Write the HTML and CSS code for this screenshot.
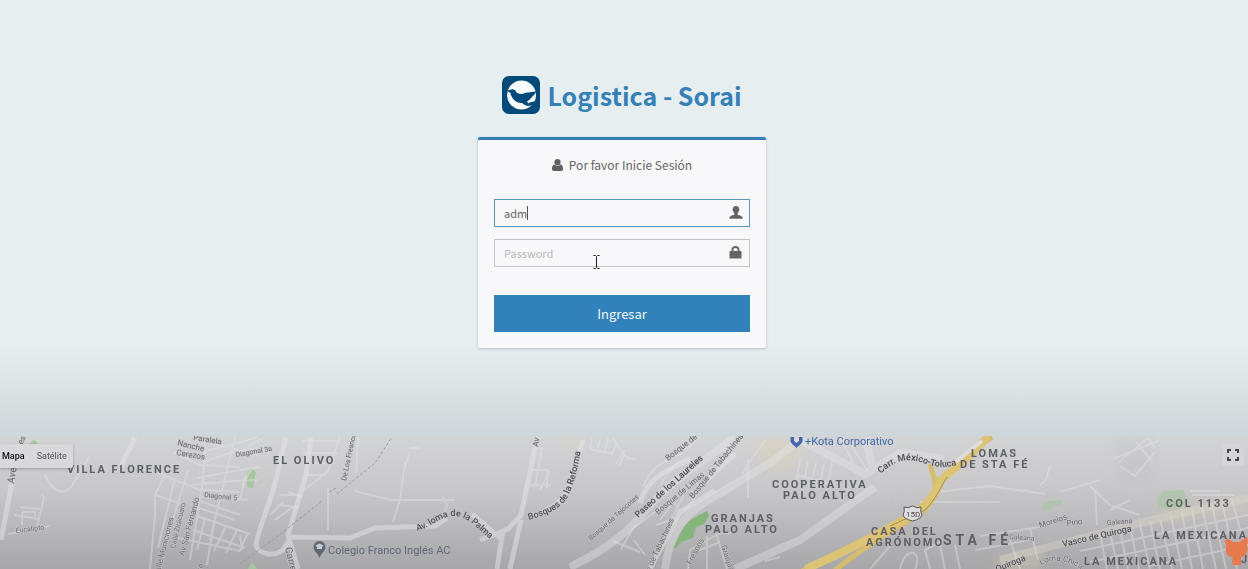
FILE: index.html
```html
<!DOCTYPE html>
<html lang="es">
<head>
<meta charset="utf-8">
<title>Logistica - Sorai</title>
<meta name="viewport" content="width=device-width, initial-scale=1">
<link rel="stylesheet" href="styles.css">
</head>
<body class="page">
<main class="login">
  <div class="login-box">
    <h1 class="brand">
      <svg class="brand-logo" viewBox="0 0 38 38" aria-hidden="true">
        <rect width="38" height="38" rx="7" fill="#034a7c"/>
        <circle cx="19.500" cy="19" r="14.500" fill="#fafcfe"/>
        <path d="M4.500 14.500 L8 14 C10.500 12.500 13.500 13.500 14.500 16.500 C18 18.500 20 18 23 17 C26 16.200 30 16 34.500 15.500 L32 19 L29.500 21.500 C28 23.500 26.500 24.500 25 25.500 L28 30 C25 30.500 22.500 29 20 27 C14 27.500 9 22 8.500 17Z" fill="#034a7c"/>
        <path d="M26 27 L33 25 L31.500 28.500 L28 30Z" fill="#034a7c"/>
      </svg>
      <span>Logistica - Sorai</span>
    </h1>
    <form class="card">
      <p class="card-title">
        <svg class="card-title-icon" viewBox="0 0 11 12" aria-hidden="true"><circle cx="5.500" cy="3.200" r="3.100"/><path d="M2.400 5.400 C4.200 7.300 6.800 7.300 8.600 5.400 C10.700 5.700 11 8 11 9.700 C11 11 10.300 12 9 12 H2 C.7 12 0 11 0 9.700 C0 8 .3 5.700 2.400 5.400Z"/></svg>
        <span>Por favor Inicie Sesión</span>
      </p>
      <div class="field">
        <input class="field-input field-input-active" type="text" aria-label="Usuario" value="adm">
        <span class="caret"></span>
        <svg class="field-icon" viewBox="0 0 14 13" aria-hidden="true"><path d="M7 0 C9.300 0 10.300 1.500 10.200 3.300 C10.600 3.500 10.400 5 9.800 5.200 C9.600 6.200 9.100 6.900 8.600 7.400 V8.400 C9.500 9.300 13 9.500 13.500 11.200 V12.700 H.5 V11.200 C1 9.500 4.500 9.300 5.400 8.400 V7.400 C4.900 6.900 4.400 6.200 4.200 5.200 C3.600 5 3.400 3.500 3.800 3.300 C3.700 1.500 4.700 0 7 0Z"/></svg>
      </div>
      <div class="field">
        <input class="field-input" type="password" aria-label="Password" placeholder="Password">
        <svg class="field-icon" viewBox="0 0 14 13" aria-hidden="true"><path fill-rule="evenodd" d="M2.500 5 V4 C2.500 1.500 4.200 0 6.500 0 S10.500 1.500 10.500 4 V5 H11.500 Q12.500 5 12.500 6 V12.600 H.5 V6 Q.5 5 1.500 5Z M4.400 5 H8.600 V4 C8.600 2.700 7.800 1.900 6.500 1.900 S4.400 2.700 4.400 4Z"/></svg>
        <svg class="pointer" viewBox="0 0 7 14" aria-hidden="true"><path d="M.5 .5 H2.500 L3.500 1.500 L4.500 .5 H6.500 M3.500 1.500 V12.500 M.5 13.500 H2.500 L3.500 12.500 L4.500 13.500 H6.500" fill="none" stroke="#222"/></svg>
      </div>
      <button class="submit" type="button">Ingresar</button>
    </form>
  </div>
</main>
<section class="map" aria-label="Mapa">
<svg class="map-canvas" viewBox="0 436 1248 133" preserveAspectRatio="xMidYMid slice">
  <defs>
    <path id="palma" d="M417 531 C432 527 439 517 452 516 C468 515 477 529 489 538 L500 546"/>
    <path id="reforma" d="M529 520 C551 513 563 508 569 494 C575 481 578 468 581 449 L584 430"/>
    <path id="toluca" d="M881 474 C898 456 914 459 926 464 Q940 469 957 465 L970 462"/>
    <path id="cinco" d="M1041 565 C1052 559 1063 559 1078 567 L1086 574"/>
    <filter id="haze" x="-20%" y="-40%" width="140%" height="180%"><feGaussianBlur stdDeviation="6"/></filter>
    <filter id="soft"><feGaussianBlur stdDeviation="0.6"/></filter>
  </defs>
  <g filter="url(#haze)">
    <path class="area-warm" d="M565 436 H580 V445 H565Z M755 440 L800 438 L802 458 L780 472 L758 460Z M1155 510 L1248 498 V510 L1160 520Z M995 560 L1040 552 V569 H995Z"/>
    <path class="area-cool" d="M1115 440 H1155 L1152 480 H1120Z M890 500 H1240 L1235 506 H1000Z"/>
  </g>
  <g class="park" filter="url(#soft)">
    <path d="M29 444 L34 440 L39 444 V447 H29Z M247 474 L251 468 L256 472 L253 488 L247 487Z M248 569 L252 562 L257 569Z"/>
    <path class="park-strong" d="M672 549 C679 540 681 526 692 519 L707 511 L709 516 L704 524 L696 527 L693 538 L681 542 L676 548Z"/>
    <path class="park-pale" d="M1042 505 L1050 501 L1060 500 L1062 504 L1050 509 L1042 510Z M1157 498 L1165 491 L1184 490 L1187 504 L1175 510 L1158 507Z"/>
  </g>
  <g class="road road-thin">
    <path d="M14 515 L40 519 M8 534 L50 526 M20 507 L40 509 M22 512 H35 V519 M22 512 V525 M41 494 L44 498 L36 530 M45 475 C52 491 65 498 73 484 L90 456"/>
    <path d="M178 450 L174 453 L200 465 L240 467 M200 440 L258 455 M205 451 L235 444 L258 437 M204 462 L232 452 L258 448 M197 478 L240 470 L258 467 M190 485 L233 481 L258 480 M158 473 L200 490 L240 492 M155 495 L185 505 M164 476 L155 495 L155 515 L150 569 M175 478 L158 548 M188 470 L167 540 M205 440 L203 480 L190 560 M235 437 L210 540 M248 500 L200 497 M200 501 L240 515 M196 507 L235 520 M197 516 L250 534 M193 530 L245 548 M178 538 L240 551 M205 519 L197 550 M214 522 L207 565 M226 526 L214 551 M237 530 L226 553 M248 533 L239 552"/>
    <path d="M248 446 L263 438 M242 484 L252 469 L260 467 M240 500 L245 477 M302 441 H340 M303 453 H338 M303 463 H334 M304 475 H325 M303 491 L328 471 L340 437 M358 437 L356 473 M352 437 L348 457 M288 492 L302 497 M278 505 L298 507 M270 515 L283 502 M275 520 L294 506 M280 495 H300 M405 462 L400 500 L393 522 M410 448 H419 M410 452 L405 467 M355 491 L390 500 L455 500 M442 496 L447 504 L444 516 M328 488 V530 M242 550 L240 535"/>
    <path d="M533 448 H542 L535 487 M532 470 H548 L547 488 M530 485 H551 M550 470 L540 490 M592 437 L590 449 L612 454 L617 442 M600 440 L597 452 M608 438 L605 453 M613 437 L620 450 L628 458 L636 459 M625 450 L615 465 M624 455 L619 466"/>
    <path d="M643 487 C650 468 662 462 682 453 L700 437 M660 485 L675 464 L690 456 M675 500 L660 520 M672 500 L680 511 M684 495 L671 520 L656 525 M703 485 L690 505 L669 528 M631 530 L660 508 M613 541 L640 552 M621 549 L635 525 M634 540 L645 555 M707 536 V569 M717 536 L727 569 M688 569 L690 550 L720 533 H731"/>
    <path d="M800 458 L797 480 M808 460 L805 478 M816 463 L812 481 M824 465 L820 482 M832 462 L829 480 M796 475 L832 484 M748 459 V498 M765 440 L742 474 M840 437 L853 462 M847 438 L867 470 M765 561 L780 557 M700 550 L720 542"/>
    <path d="M1113 459 L1160 440 M1118 463 L1148 438 L1155 448 M1120 466 L1135 476 L1155 452 M1136 442 L1152 461 M1050 465 L1046 480 L1040 485 M1090 486 L1110 505 L1140 515 M1095 490 L1097 525 M1110 510 L1130 500 M1190 491 H1220 M1192 495 H1235 M1060 492 L1100 480 M935 492 L990 486 L1045 494 M920 502 H1000"/>
    <path d="M1010 540 L1020 569 M1030 529 L1038 560 M1100 534 L1107 569 M1110 532 L1118 569 M1120 530 L1128 569 M1130 527 L1139 569 M1140 524 L1150 569 M1150 521 L1160 569 M1160 519 L1172 569 M1171 516 L1182 569 M1182 513 L1192 569 M1192 510 L1203 569 M1202 507 L1216 569 M1212 505 L1226 569 M1222 502 L1237 569 M1232 500 L1243 540 M1080 551 L1248 515 M1090 562 L1248 528 M1150 566 L1248 545"/>
    <path d="M900 569 C905 545 924 550 915 569 M930 569 L925 550 L940 542 M945 569 L940 545 M960 569 L955 545 M890 546 L870 569 M975 550 L1030 540 M980 536 L1040 527 L1060 517"/>
  </g>
  <g class="road">
    <path d="M19 445 L1 540 M135 437 L121 466 M286 437 L276 480 C266 515 258 530 256 545 C258 553 272 558 283 550 L291 537 L350 538 L375 528 L435 526 L447 518 M311 437 L306 475 L288 535 L298 569"/>
    <path d="M535 448 L521 515 L508 529 L480 540 M521 520 L510 569 M529 517 Q562 508 570 484 L583 440 M503 530 L497 569 M472 514 L500 538"/>
    <path d="M640 503 C646 480 665 470 690 460 M735 454 L705 482 M715 490 L680 512 L660 550 L650 569"/>
  </g>
  <g class="road road-wide">
    <path d="M570 567 C610 548 630 530 649 507 C672 479 703 463 735 437"/>
    <path d="M665 569 C669 535 682 516 707 501 L770 463 L800 440 L865 474 L900 453 L944 459"/>
    <path d="M735 569 L800 540 L875 487 M866 437 L872 468"/>
    <path class="road-pale" d="M1000 560 L1140 523 L1248 498"/>
  </g>
  <g class="rail"><path d="M240 564 L282 533 L323 500 M329 492 L336 488 M337 494 L375 463 L392 437"/></g>
  <g class="highway">
    <path class="highway-edge" d="M795 575 C835 552 880 536 906 519 C926 510 937 499 935 481 L930 464 M830 575 C855 552 890 532 918 515 C933 505 938 490 944 477 L964 457 L992 437"/>
    <path class="highway-core" d="M806 569 C835 556 880 534 910 516 C930 504 937 490 940 481 L970 455 L988 437"/>
    <path class="highway-line" d="M890 526 L925 510 C935 500 940 489 947 477"/>
    <path class="highway-gap" d="M953 464 L982 441"/>
  </g>
  <g class="shield">
    <path d="M904 507 Q908 509 912.500 506 Q917 509 921 507 Q920 512 922 515 Q921 519 912.500 521 Q904 519 903 515 Q905 512 904 507Z"/>
    <text x="906" y="517" font-size="8">15D</text>
  </g>
  <g class="road-label">
    <text transform="translate(14 484) rotate(-81)" font-size="10">Aven</text>
    <text transform="translate(22 445) rotate(-60)" font-size="8">es</text>
    <text transform="translate(193 440) rotate(9)" font-size="8">Paralela</text>
    <text transform="translate(177 445) rotate(14)" font-size="8">Nanche</text>
    <text transform="translate(176 455) rotate(9)" font-size="8">Cerezos</text>
    <text transform="translate(236 457) rotate(-10)" font-size="7">Diagonal 3a</text>
    <text transform="translate(204 497) rotate(6)" font-size="7">Diagonal 5</text>
    <text transform="translate(16 533) rotate(-7)" font-size="7">Eucalipto</text>
    <text transform="translate(159 577) rotate(-76)" font-size="8">Calle Municiones</text>
    <text transform="translate(175 549) rotate(-77)" font-size="7">Calle Zitácuaro</text>
    <text transform="translate(184 556) rotate(-75)" font-size="8">Av San Fernando</text>
    <text transform="translate(346 481) rotate(-78)" font-size="7">De Los Fresnos</text>
    <text transform="translate(285 548) rotate(77)" font-size="10">Carretera</text>
    <text transform="translate(202 571) rotate(-75)" font-size="8">re</text>
    <text transform="translate(538 447) rotate(-80)" font-size="8">Av</text>
    <text transform="translate(591 541) rotate(-42)" font-size="7">Bosque de Tejocotes</text>
    <text transform="translate(668 461) rotate(-38)" font-size="8">Bosque de</text>
    <text transform="translate(658 515) rotate(-40)" font-size="8">Bosque de Limas</text>
    <text transform="translate(693 499) rotate(-51)" font-size="8">Bosque de Tabachines</text>
    <text transform="translate(650 572) rotate(-65)" font-size="8">e de Tabachines</text>
    <text transform="translate(691 565) rotate(-62)" font-size="8">Fresnos</text>
    <text transform="translate(721 546) rotate(72)" font-size="8">Granjas</text>
    <text transform="translate(1040 528) rotate(-18)" font-size="8">Morelos</text>
    <text transform="translate(1067 526) rotate(-8)" font-size="8">Pino</text>
    <text transform="translate(1107 525) rotate(-4)" font-size="7">Galeana</text>
    <text transform="translate(1009 539) rotate(4)" font-size="7">Galeana</text>
    <text font-size="8"><textPath href="#cinco">Loma Chica</textPath></text>
  </g>
  <g class="road-label road-label-main">
    <text transform="translate(638 518) rotate(-42)" font-size="9">Paseo de los Laureles</text>
    <text transform="translate(1063 547) rotate(-13)" font-size="9">Vasco de Quiroga</text>
    <text transform="translate(997 572) rotate(-22)" font-size="9">Quiroga</text>
    <text font-size="9"><textPath href="#palma">Av. loma de la Palma</textPath></text>
    <text font-size="9"><textPath href="#reforma">Bosques de la Reforma</textPath></text>
    <text font-size="9"><textPath href="#toluca">Carr. México-Toluca</textPath></text>
  </g>
  <g class="district">
    <text x="67" y="473">VILLA FLORENCE</text>
    <text x="273" y="464">EL OLIVO</text>
    <text x="711" y="522">GRANJAS</text>
    <text x="705" y="533">PALO ALTO</text>
    <text x="772" y="488">COOPERATIVA</text>
    <text x="783" y="499">PALO ALTO</text>
    <text x="971" y="457">LOMAS</text>
    <text x="960" y="468">DE STA FÉ</text>
    <text x="871" y="535">CASA DEL</text>
    <text x="866" y="546">AGRÓNOMO</text>
    <text class="district-large" x="943" y="545">STA FÉ</text>
    <text x="1166" y="507">COL 1133</text>
    <text x="1154" y="539">LA MEXICANA</text>
    <text x="1084" y="565">LA MEXICANA</text>
    <text x="1241" y="563">J</text>
  </g>
  <g class="place">
    <path d="M319.500 558 C318 553 313.500 551 313.500 547 A6 6 0 0 1 325.500 547 C325.500 551 321 553 319.500 558Z"/>
    <path d="M315.500 545.500 L319.500 543.500 L323.500 545.500 L322 547 V549 H317 V547Z" fill="#c8cbce"/>
    <text x="328" y="554">Colegio Franco Inglés AC</text>
  </g>
  <g class="place place-blue">
    <path d="M790.500 437 H794 V441 L796.500 443 L799 441 V437 H802.500 V441 C802 444 798 446 796.500 448 C795 446 791 444 790.500 441Z"/>
    <text x="805" y="445">+Kota Corporativo</text>
  </g>
</svg>
<div class="map-types">
  <button class="map-type map-type-active" type="button">Mapa</button>
  <button class="map-type" type="button">Satélite</button>
</div>
<button class="fullscreen" type="button" aria-label="Pantalla completa">
  <svg viewBox="0 0 12 12" aria-hidden="true"><path d="M1 4 V1 H4 M8 1 H11 V4 M11 8 V11 H8 M4 11 H1 V8" fill="none" stroke="#444446" stroke-width="2"/></svg>
</button>
<svg class="mascot" viewBox="0 0 23 29" aria-hidden="true"><path d="M1 2 C4 2 6 3 8 5 H15 C17 2.500 20 1 22 0 C23 3 23 6 22 8 C23 10 23 14 21 17 C20 19 18 20 16 20 V28 H7.500 V20 C5 20 3 19 2 17 C.5 14 .5 11 1.500 9 C0 7 0 4 1 2Z"/></svg>
</section>
</body>
</html>
```

FILE: styles.css
```css
* {
  box-sizing: border-box;
}

.page {
  margin: 0;
  min-height: 100vh;
  display: flex;
  flex-direction: column;
  background: #e6eef0;
  color: #666;
  font-family: "Noto Sans CJK SC", "Noto Sans", sans-serif;
}

.login {
  display: flex;
  justify-content: center;
  padding: 76px 4px 88px 0;
  background: linear-gradient(to top, #cdd6d8, #e6eef0 92px);
}

.login-box {
  width: 288px;
}

.brand {
  display: flex;
  align-items: center;
  justify-content: center;
  gap: 7px;
  margin: 0 0 23px;
  color: #3480b9;
  font-size: 25px;
  font-weight: 700;
  line-height: 38px;
  white-space: nowrap;
}

.brand-logo {
  flex: none;
  width: 38px;
  height: 38px;
}

.card {
  padding: 16px;
  border-top: 3px solid #3280b8;
  border-radius: 2px;
  background: #f8f7f9;
  box-shadow: 0 1px 3px rgba(60, 60, 80, 0.25);
}

.card-title {
  display: flex;
  align-items: center;
  justify-content: center;
  gap: 6px;
  margin: 0 0 25px;
  font-size: 12px;
  line-height: 18px;
}

.card-title-icon {
  width: 11px;
  height: 12px;
  fill: #606062;
}

.field {
  position: relative;
  margin-bottom: 12px;
}

.field-input {
  display: block;
  width: 100%;
  height: 28px;
  padding: 0 30px 0 9px;
  border: 1px solid #c4c4c8;
  border-radius: 0;
  outline: 0;
  background: transparent;
  color: #666;
  font-family: inherit;
  font-size: 11px;
}

.field-input::placeholder {
  color: #b9b9bc;
}

.field-input-active {
  border-color: #5b96bb;
}

.field-icon {
  position: absolute;
  top: 7px;
  right: 7px;
  width: 14px;
  height: 13px;
  fill: #646466;
}

.caret {
  position: absolute;
  top: 7px;
  left: 33px;
  width: 1px;
  height: 14px;
  background: #555;
}

.pointer {
  position: absolute;
  top: 16px;
  left: 99px;
  width: 7px;
  height: 14px;
}

.submit {
  display: block;
  width: 100%;
  height: 37px;
  margin-top: 28px;
  border: 0;
  background: #3182bb;
  color: #f2f7fb;
  font-family: inherit;
  font-size: 13px;
}

.map {
  position: relative;
  display: flex;
  flex: 1;
  min-height: 133px;
  overflow: hidden;
  background: linear-gradient(#d3d4d6, #c8c7c9 40%, #a7a6a8);
  font-family: Roboto, sans-serif;
}

.map-canvas {
  position: absolute;
  width: 100%;
  height: 100%;
}

.area-warm {
  fill: #e2cfae;
  opacity: 0.4;
}

.area-cool {
  fill: #b9b9bf;
  opacity: 0.3;
}

.park {
  fill: #a3c79c;
}

.park-strong {
  fill: #86b57c;
}

.park-pale {
  opacity: 0.6;
}

.road {
  fill: none;
  stroke: #e6e6e8;
  stroke-width: 5px;
  stroke-linejoin: round;
  opacity: 0.5;
}

.road-thin {
  stroke-width: 2px;
  opacity: 0.4;
}

.road-wide {
  stroke-width: 8px;
  opacity: 0.4;
}

.road-pale {
  stroke: #ddd6c8;
}

.rail {
  fill: none;
  stroke: #999;
  stroke-dasharray: 3 2;
}

.highway {
  fill: none;
}

.highway-edge {
  stroke: #d5bd6c;
  stroke-width: 5px;
}

.highway-core {
  stroke: #dcc474;
  stroke-width: 8px;
}

.highway-line {
  stroke: #a58c4a;
}

.highway-gap {
  stroke: #dedcd8;
  stroke-width: 4px;
}

.shield path {
  fill: #dedee0;
  stroke: #555;
}

.shield text {
  fill: #444;
}

.road-label {
  fill: #6a6a6e;
  stroke: #c8c8ca;
  stroke-width: 1px;
  paint-order: stroke;
}

.road-label-main {
  fill: #505054;
  font-weight: 500;
}

.district {
  fill: #5d5f66;
  font-size: 11px;
  font-weight: 700;
  letter-spacing: 2px;
}

.district-large {
  font-size: 14px;
  letter-spacing: 4px;
}

.place {
  fill: #5d6a76;
  font-size: 11px;
}

.place-blue {
  fill: #3f68ad;
}

.map-types {
  position: absolute;
  top: 8px;
  left: 0;
  display: flex;
  gap: 12px;
  height: 24px;
  padding: 0 6px 0 2px;
  border-radius: 0 2px 2px 0;
  background: #d9d9db;
  box-shadow: 0 1px 3px rgba(0, 0, 0, 0.25);
}

.map-type {
  padding: 0;
  border: 0;
  background: none;
  color: #55565a;
  font-family: inherit;
  font-size: 9px;
}

.map-type-active {
  color: #111;
  font-weight: 500;
}

.fullscreen {
  position: absolute;
  top: 8px;
  right: 4px;
  display: grid;
  place-items: center;
  width: 22px;
  height: 22px;
  padding: 0;
  border: 0;
  background: #d5d5d7;
}

.fullscreen svg {
  width: 12px;
  height: 12px;
}

.mascot {
  position: absolute;
  right: 0;
  bottom: 3px;
  width: 23px;
  height: 29px;
  fill: #e7794d;
}
```
